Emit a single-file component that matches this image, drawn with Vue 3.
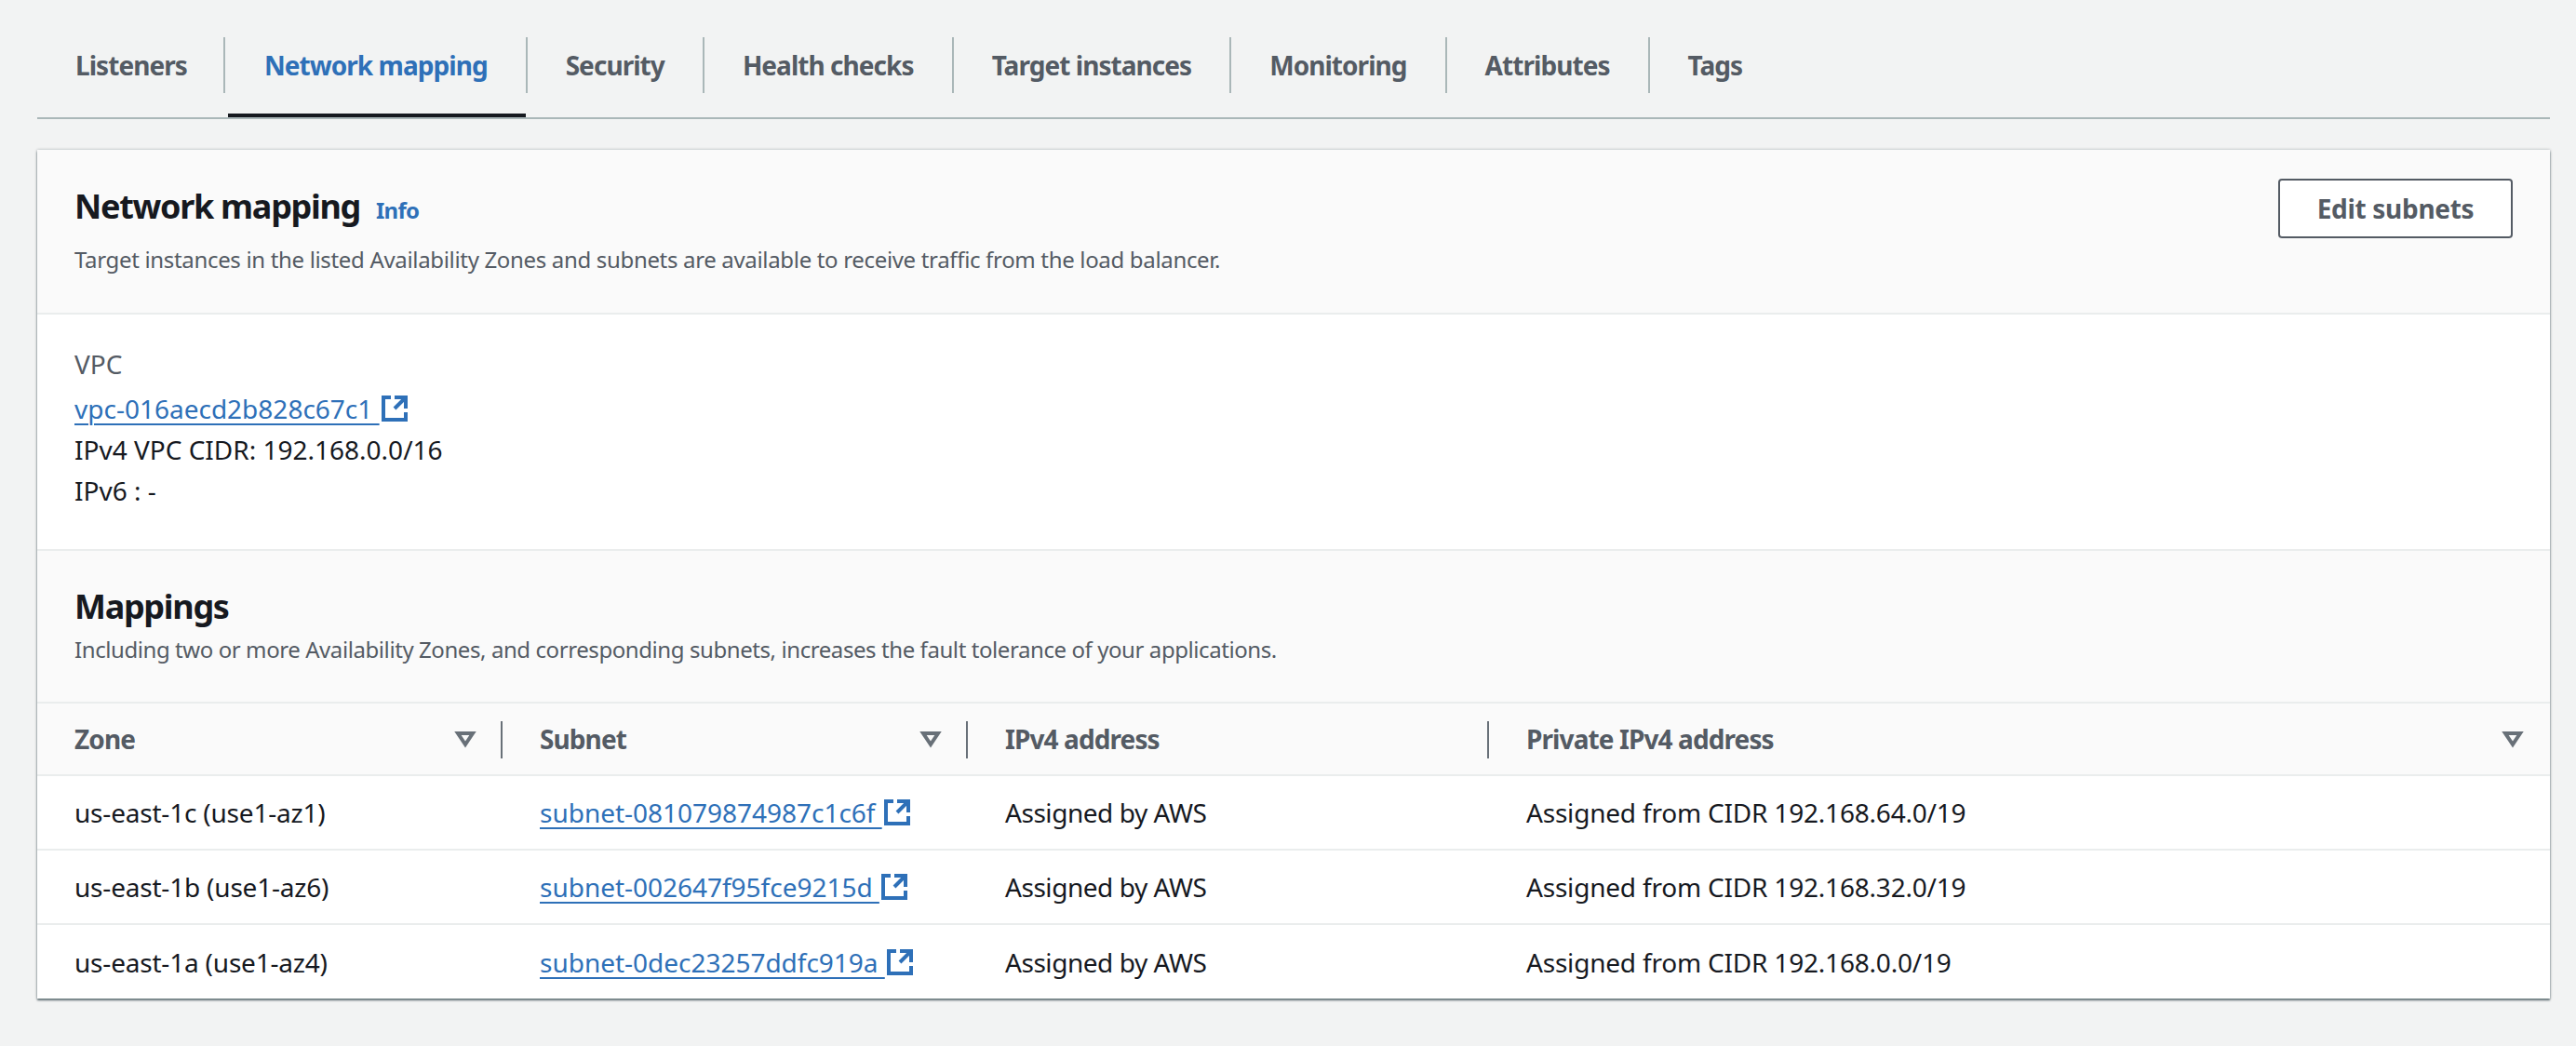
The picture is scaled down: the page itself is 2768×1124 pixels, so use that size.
<script setup>
const tabs = ['Listeners', 'Network mapping', 'Security', 'Health checks', 'Target instances', 'Monitoring', 'Attributes', 'Tags']

const columns = [
  { label: 'Zone', sortable: true },
  { label: 'Subnet', sortable: true },
  { label: 'IPv4 address', sortable: false },
  { label: 'Private IPv4 address', sortable: true },
]

const rows = [
  { zone: 'us-east-1c (use1-az1)', subnet: 'subnet-081079874987c1c6f', cidr: '192.168.64.0/19' },
  { zone: 'us-east-1b (use1-az6)', subnet: 'subnet-002647f95fce9215d', cidr: '192.168.32.0/19' },
  { zone: 'us-east-1a (use1-az4)', subnet: 'subnet-0dec23257ddfc919a', cidr: '192.168.0.0/19' },
]
</script>

<template>
  <div class="page">
    <div class="tabs">
      <div v-for="(t, i) in tabs" :key="t" class="tab" :class="{ active: i === 1 }">
        <span class="tab-label">{{ t }}</span>
      </div>
    </div>

    <section class="card">
      <header class="card-head">
        <div>
          <div class="title-row">
            <h2>Network mapping</h2>
            <a class="info">Info</a>
          </div>
          <p class="desc">Target instances in the listed Availability Zones and subnets are available to receive traffic from the load balancer.</p>
        </div>
        <button class="btn" type="button">Edit subnets</button>
      </header>

      <div class="vpc">
        <div class="vpc-label">VPC</div>
        <div class="line">
          <a class="link">vpc-016aecd2b828c67c1&nbsp;</a>
          <svg class="ext" viewBox="0 0 16 16"><path d="M14 8.01v-6H8M14.02 2 8 8M6 2H2v12h12v-4" /></svg>
        </div>
        <div class="line">IPv4 VPC CIDR: 192.168.0.0/16</div>
        <div class="line">IPv6 : -</div>
      </div>

      <div class="map-head">
        <h3>Mappings</h3>
        <p class="desc">Including two or more Availability Zones, and corresponding subnets, increases the fault tolerance of your applications.</p>
      </div>

      <div class="table">
        <div class="tr th-row">
          <div v-for="c in columns" :key="c.label" class="th">
            <span>{{ c.label }}</span>
            <svg v-if="c.sortable" class="caret" viewBox="0 0 16 16"><path d="M4 5h8l-4 6-4-6z" /></svg>
          </div>
        </div>
        <div v-for="r in rows" :key="r.subnet" class="tr">
          <div class="td">{{ r.zone }}</div>
          <div class="td">
            <a class="link subnet">{{ r.subnet }}&nbsp;</a>
            <svg class="ext" viewBox="0 0 16 16"><path d="M14 8.01v-6H8M14.02 2 8 8M6 2H2v12h12v-4" /></svg>
          </div>
          <div class="td assigned">Assigned by AWS</div>
          <div class="td">Assigned from CIDR {{ r.cidr }}</div>
        </div>
      </div>
    </section>
  </div>
</template>

<style>
html, body {
  background: #f2f3f3;
}
</style>

<style scoped>
.page {
  height: 1124px;
  box-sizing: border-box;
  padding: 0 28px 0 40px;
  background: #f2f3f3;
  color: #16191f;
  font: 28px/44px "Noto Sans", sans-serif;
}
.tabs {
  display: flex;
  height: 128px;
  padding-top: 40px;
  box-sizing: border-box;
  border-bottom: 2px solid #aab7b8;
}
.tab {
  height: 60px;
  display: flex;
  align-items: center;
  padding: 0 41px;
  border-right: 2px solid #aab7b8;
  position: relative;
  font-weight: 700;
  letter-spacing: -0.95px;
  color: #545b64;
}
.tab:first-child {
  padding-right: 39px;
}
.tab:last-child {
  border-right: 0;
}
.tab.active {
  padding-left: 42px;
  color: #2e70b8;
}
.tab.active::after {
  content: '';
  position: absolute;
  left: 3px;
  right: 0;
  bottom: -26px;
  height: 4px;
  background: #16191f;
}
.card {
  margin-top: 33px;
  background: #fff;
  box-shadow: 0 2px 2px rgba(0, 28, 36, 0.55), 0 0 3px rgba(0, 28, 36, 0.3);
}
.card-head {
  height: 177px;
  box-sizing: border-box;
  padding: 31px 40px 0;
  display: flex;
  justify-content: space-between;
  background: #fafafa;
  border-bottom: 2px solid #eaeded;
}
.title-row {
  display: flex;
  align-items: baseline;
  gap: 17px;
  height: 60px;
}
h2, h3 {
  margin: 0;
  font-size: 36px;
  line-height: 60px;
  font-weight: 700;
  letter-spacing: -1.3px;
}
.info {
  font-size: 24px;
  font-weight: 700;
  letter-spacing: -0.8px;
  color: #2e70b8;
}
.desc {
  margin: 0;
  font-size: 24px;
  line-height: 36px;
  letter-spacing: -0.42px;
  color: #545b64;
}
.card-head .desc {
  margin-top: 9px;
  letter-spacing: -0.33px;
}
.btn {
  width: 252px;
  height: 64px;
  box-sizing: border-box;
  border: 2px solid #545b64;
  border-radius: 4px;
  background: #fff;
  color: #545b64;
  font: 700 28px "Noto Sans", sans-serif;
  letter-spacing: -0.3px;
}
.vpc {
  height: 254px;
  box-sizing: border-box;
  padding: 31px 40px 0;
  border-bottom: 2px solid #eaeded;
}
.vpc-label {
  color: #545b64;
  margin-bottom: 4px;
}
.line {
  display: flex;
  align-items: center;
  height: 44px;
}
.link {
  color: #2e70b8;
  text-decoration: underline;
  text-decoration-thickness: 2px;
  text-underline-offset: 5px;
}
.subnet {
  letter-spacing: -0.02px;
}
.ext {
  width: 32px;
  height: 32px;
  fill: none;
  stroke: #2e70b8;
  stroke-width: 2;
}
.map-head {
  height: 162px;
  box-sizing: border-box;
  padding: 30px 40px 0;
  background: #fafafa;
}
.map-head .desc {
  margin-top: -2px;
}
.tr {
  display: grid;
  grid-template-columns: 500px 500px 560px 1fr;
  height: 80px;
  box-sizing: border-box;
  border-top: 2px solid #eaeded;
}
.tr:last-child {
  height: 81px;
}
.th-row {
  height: 78px;
  background: #fafafa;
}
.th {
  display: flex;
  align-items: center;
  justify-content: space-between;
  padding: 0 24px 0 40px;
  font-weight: 700;
  letter-spacing: -0.9px;
  color: #545b64;
  position: relative;
}
.th:not(:last-child)::after {
  content: '';
  position: absolute;
  right: 0;
  top: 19px;
  height: 40px;
  width: 2px;
  background: #687078;
}
.caret {
  width: 32px;
  height: 32px;
  fill: none;
  stroke: #687078;
  stroke-width: 2;
}
.td {
  display: flex;
  align-items: center;
  padding-left: 40px;
  letter-spacing: -0.2px;
}
.td.assigned {
  letter-spacing: -0.45px;
}
</style>
